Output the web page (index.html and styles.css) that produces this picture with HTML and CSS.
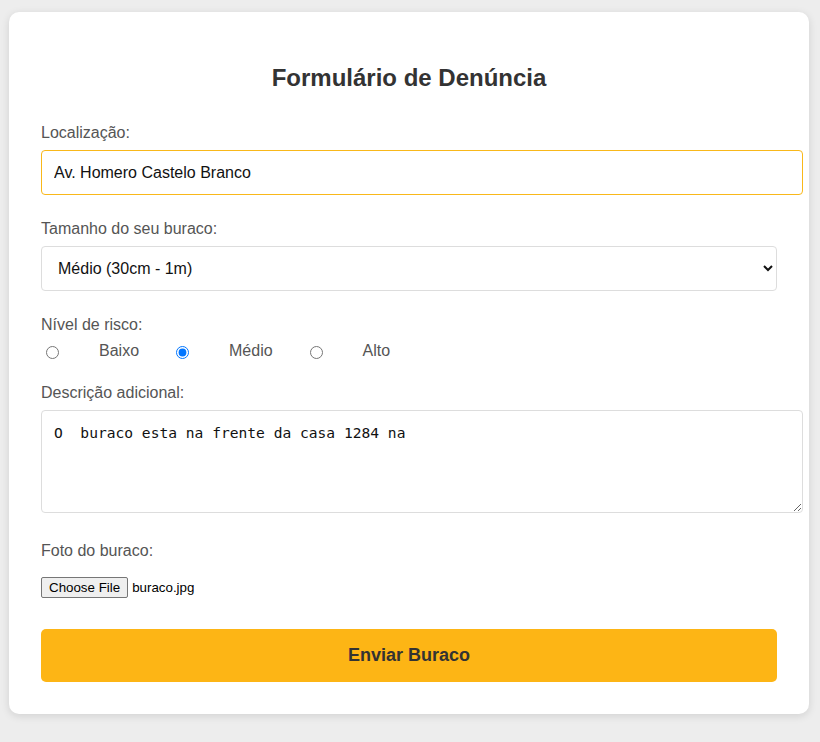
FILE: index.html
```html
<!DOCTYPE html>
<html lang="pt-BR">
<head>
<meta charset="utf-8">
<title>Formulário de Denúncia</title>
<link rel="stylesheet" href="styles.css">
</head>
<body>
<div class="card">
  <h2 class="title">Formulário de Denúncia</h2>
  <form class="form">
    <div class="group">
      <label class="label" for="loc">Localização:</label>
      <input class="field focused" id="loc" type="text" value="Av. Homero Castelo Branco">
    </div>
    <div class="group">
      <label class="label" for="tam">Tamanho do seu buraco:</label>
      <select class="select" id="tam">
        <option>Pequeno (até 30cm)</option>
        <option selected>Médio (30cm - 1m)</option>
        <option>Grande (mais de 1m)</option>
      </select>
    </div>
    <div class="group group-radio">
      <span class="label">Nível de risco:</span>
      <div class="radios">
        <input class="radio" type="radio" name="risco" id="r1"><label class="radio-label" for="r1">Baixo</label>
        <input class="radio" type="radio" name="risco" id="r2" checked><label class="radio-label" for="r2">Médio</label>
        <input class="radio" type="radio" name="risco" id="r3"><label class="radio-label" for="r3">Alto</label>
      </div>
    </div>
    <div class="group group-text">
      <label class="label" for="desc">Descrição adicional:</label>
      <textarea class="textarea" id="desc">O  buraco esta na frente da casa 1284 na</textarea>
    </div>
    <div class="group group-file">
      <span class="label">Foto do buraco:</span>
      <div class="file-row">
        <button type="button" class="file-btn">Choose File</button><span class="file-name">buraco.jpg</span>
      </div>
    </div>
    <button type="button" class="submit">Enviar Buraco</button>
  </form>
</div>
</body>
</html>
```

FILE: styles.css
```css
html, body {
  margin: 0;
  padding: 0;
  background: #ededed;
}
body {
  padding: 12px 11px 28px 9px;
  font-family: "Liberation Sans", Arial, sans-serif;
}
.card {
  width: 736px;
  padding: 32px;
  background: #ffffff;
  border-radius: 10px;
  box-shadow: 0 2px 8px rgba(0, 0, 0, 0.12);
}
.title {
  margin: 20px 0 31px;
  text-align: center;
  font-size: 24px;
  font-weight: bold;
  color: #333333;
  line-height: 28px;
}
.form {
  margin: 0;
}
.group {
  margin-bottom: 24px;
}
.label {
  display: block;
  font-size: 16px;
  line-height: 20px;
  color: #555555;
  margin-bottom: 7px;
}
.field {
  display: block;
  width: 100%;
  height: 19px;
  padding: 12px;
  margin: 0;
  font-family: "Liberation Sans", Arial, sans-serif;
  font-size: 16px;
  color: #111111;
  border: 1px solid #dddddd;
  border-radius: 4px;
  outline: none;
}
.field.focused {
  border-color: #f9b81a;
}
.select {
  display: block;
  width: 100%;
  height: 45px;
  padding: 0 8px 0 12px;
  margin: 0;
  font-family: "Liberation Sans", Arial, sans-serif;
  font-size: 16px;
  color: #111111;
  background: #ffffff;
  border: 1px solid #dddddd;
  border-radius: 4px;
}
.group-radio {
  margin-bottom: 22px;
}
.group-radio .label {
  margin-bottom: 6px;
}
.radios {
  display: flex;
  align-items: center;
  height: 20px;
}
.radio {
  width: 13px;
  height: 13px;
  margin: 2px 40px 0 5px;
}
.radio-label {
  font-size: 16px;
  line-height: 18px;
  color: #555555;
  margin-right: 32px;
}
.textarea {
  display: block;
  width: 100%;
  height: 77px;
  padding: 12px;
  margin: 0;
  font-family: "DejaVu Sans Mono", monospace;
  font-size: 14.6px;
  line-height: 20px;
  color: #111111;
  border: 1px solid #dddddd;
  border-radius: 4px;
  resize: vertical;
  outline: none;
}
.group-text {
  margin-bottom: 28px;
}
.group-file {
  margin-bottom: 31px;
}
.group-file .label {
  margin-bottom: 16px;
}
.file-row {
  display: flex;
  align-items: center;
  height: 21px;
}
.file-btn {
  height: 21px;
  padding: 1px 7px;
  margin: 0 4px 0 0;
  font-family: "Liberation Sans", Arial, sans-serif;
  font-size: 13.33px;
  color: #000000;
  background: #efefef;
  border: 1px solid #767676;
  border-radius: 2px;
}
.file-name {
  font-size: 13.33px;
  color: #000000;
}
.submit {
  display: block;
  width: 100%;
  height: 53px;
  padding: 0;
  margin: 0;
  font-family: "Liberation Sans", Arial, sans-serif;
  font-size: 18px;
  font-weight: bold;
  color: #333333;
  background: #fdb515;
  border: none;
  border-radius: 5px;
}
```
